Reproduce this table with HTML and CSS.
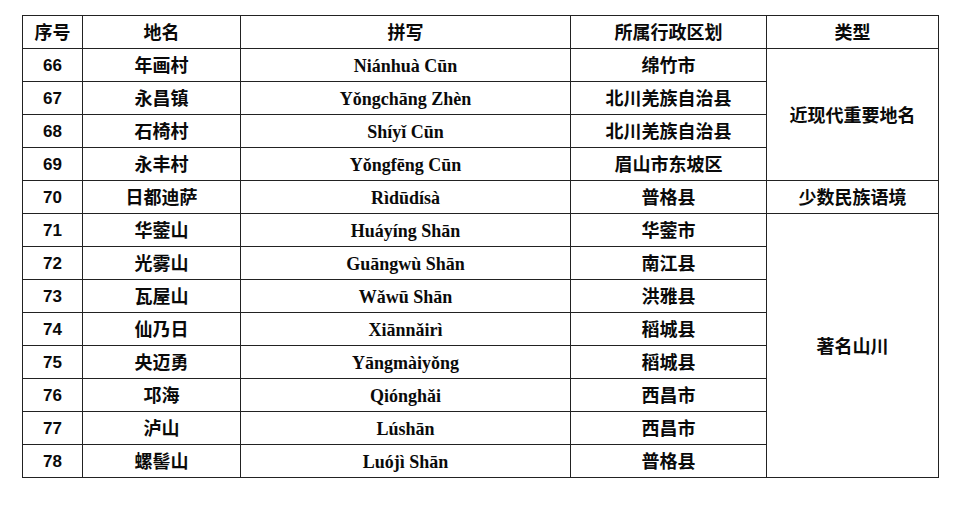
FILE: index.html
```html
<!DOCTYPE html>
<html lang="zh">
<head>
<meta charset="utf-8">
<title>地名表</title>
<link rel="stylesheet" href="styles.css">
</head>
<body>
<table class="names">
  <colgroup>
    <col class="c-no"><col class="c-name"><col class="c-py"><col class="c-area"><col class="c-type">
  </colgroup>
  <thead>
    <tr><th>序号</th><th>地名</th><th>拼写</th><th>所属行政区划</th><th>类型</th></tr>
  </thead>
  <tbody>
    <tr><td class="no">66</td><td>年画村</td><td class="py">Niánhuà Cūn</td><td>绵竹市</td><td rowspan="4">近现代重要地名</td></tr>
    <tr><td class="no">67</td><td>永昌镇</td><td class="py">Yǒngchāng Zhèn</td><td>北川羌族自治县</td></tr>
    <tr><td class="no">68</td><td>石椅村</td><td class="py">Shíyǐ Cūn</td><td>北川羌族自治县</td></tr>
    <tr><td class="no">69</td><td>永丰村</td><td class="py">Yǒngfēng Cūn</td><td>眉山市东坡区</td></tr>
    <tr><td class="no">70</td><td>日都迪萨</td><td class="py">Rìdūdísà</td><td>普格县</td><td>少数民族语境</td></tr>
    <tr><td class="no">71</td><td>华蓥山</td><td class="py">Huáyíng Shān</td><td>华蓥市</td><td rowspan="8">著名山川</td></tr>
    <tr><td class="no">72</td><td>光雾山</td><td class="py">Guāngwù Shān</td><td>南江县</td></tr>
    <tr><td class="no">73</td><td>瓦屋山</td><td class="py">Wǎwū Shān</td><td>洪雅县</td></tr>
    <tr><td class="no">74</td><td>仙乃日</td><td class="py">Xiānnǎirì</td><td>稻城县</td></tr>
    <tr><td class="no">75</td><td>央迈勇</td><td class="py">Yāngmàiyǒng</td><td>稻城县</td></tr>
    <tr><td class="no">76</td><td>邛海</td><td class="py">Qiónghǎi</td><td>西昌市</td></tr>
    <tr><td class="no">77</td><td>泸山</td><td class="py">Lúshān</td><td>西昌市</td></tr>
    <tr><td class="no">78</td><td>螺髻山</td><td class="py">Luójì Shān</td><td>普格县</td></tr>
  </tbody>
</table>
</body>
</html>
```

FILE: styles.css
```css
html, body {
  background: #ffffff;
}
body {
  margin: 0;
  padding: 15px 0 0 22px;
  font-family: "Noto Sans CJK SC", "Liberation Sans", sans-serif;
  color: #0a0a0a;
}
.names {
  border-collapse: collapse;
  table-layout: fixed;
  width: 917px;
}
.c-no { width: 60px; }
.c-name { width: 158px; }
.c-py { width: 330px; }
.c-area { width: 196px; }
.c-type { width: 172px; }
.names th,
.names td {
  border: 1px solid #222;
  height: 30px;
  padding: 0 0 2px 0;
  text-align: center;
  vertical-align: middle;
  font-size: 18px;
  font-weight: 700;
  line-height: 20px;
}
.names td.no {
  font-family: "Liberation Sans", sans-serif;
  font-size: 17px;
  padding: 2px 0 0 0;
}
.names td.py {
  font-family: "Liberation Serif", serif;
  font-size: 18px;
  padding: 2px 0 0 0;
}
```
